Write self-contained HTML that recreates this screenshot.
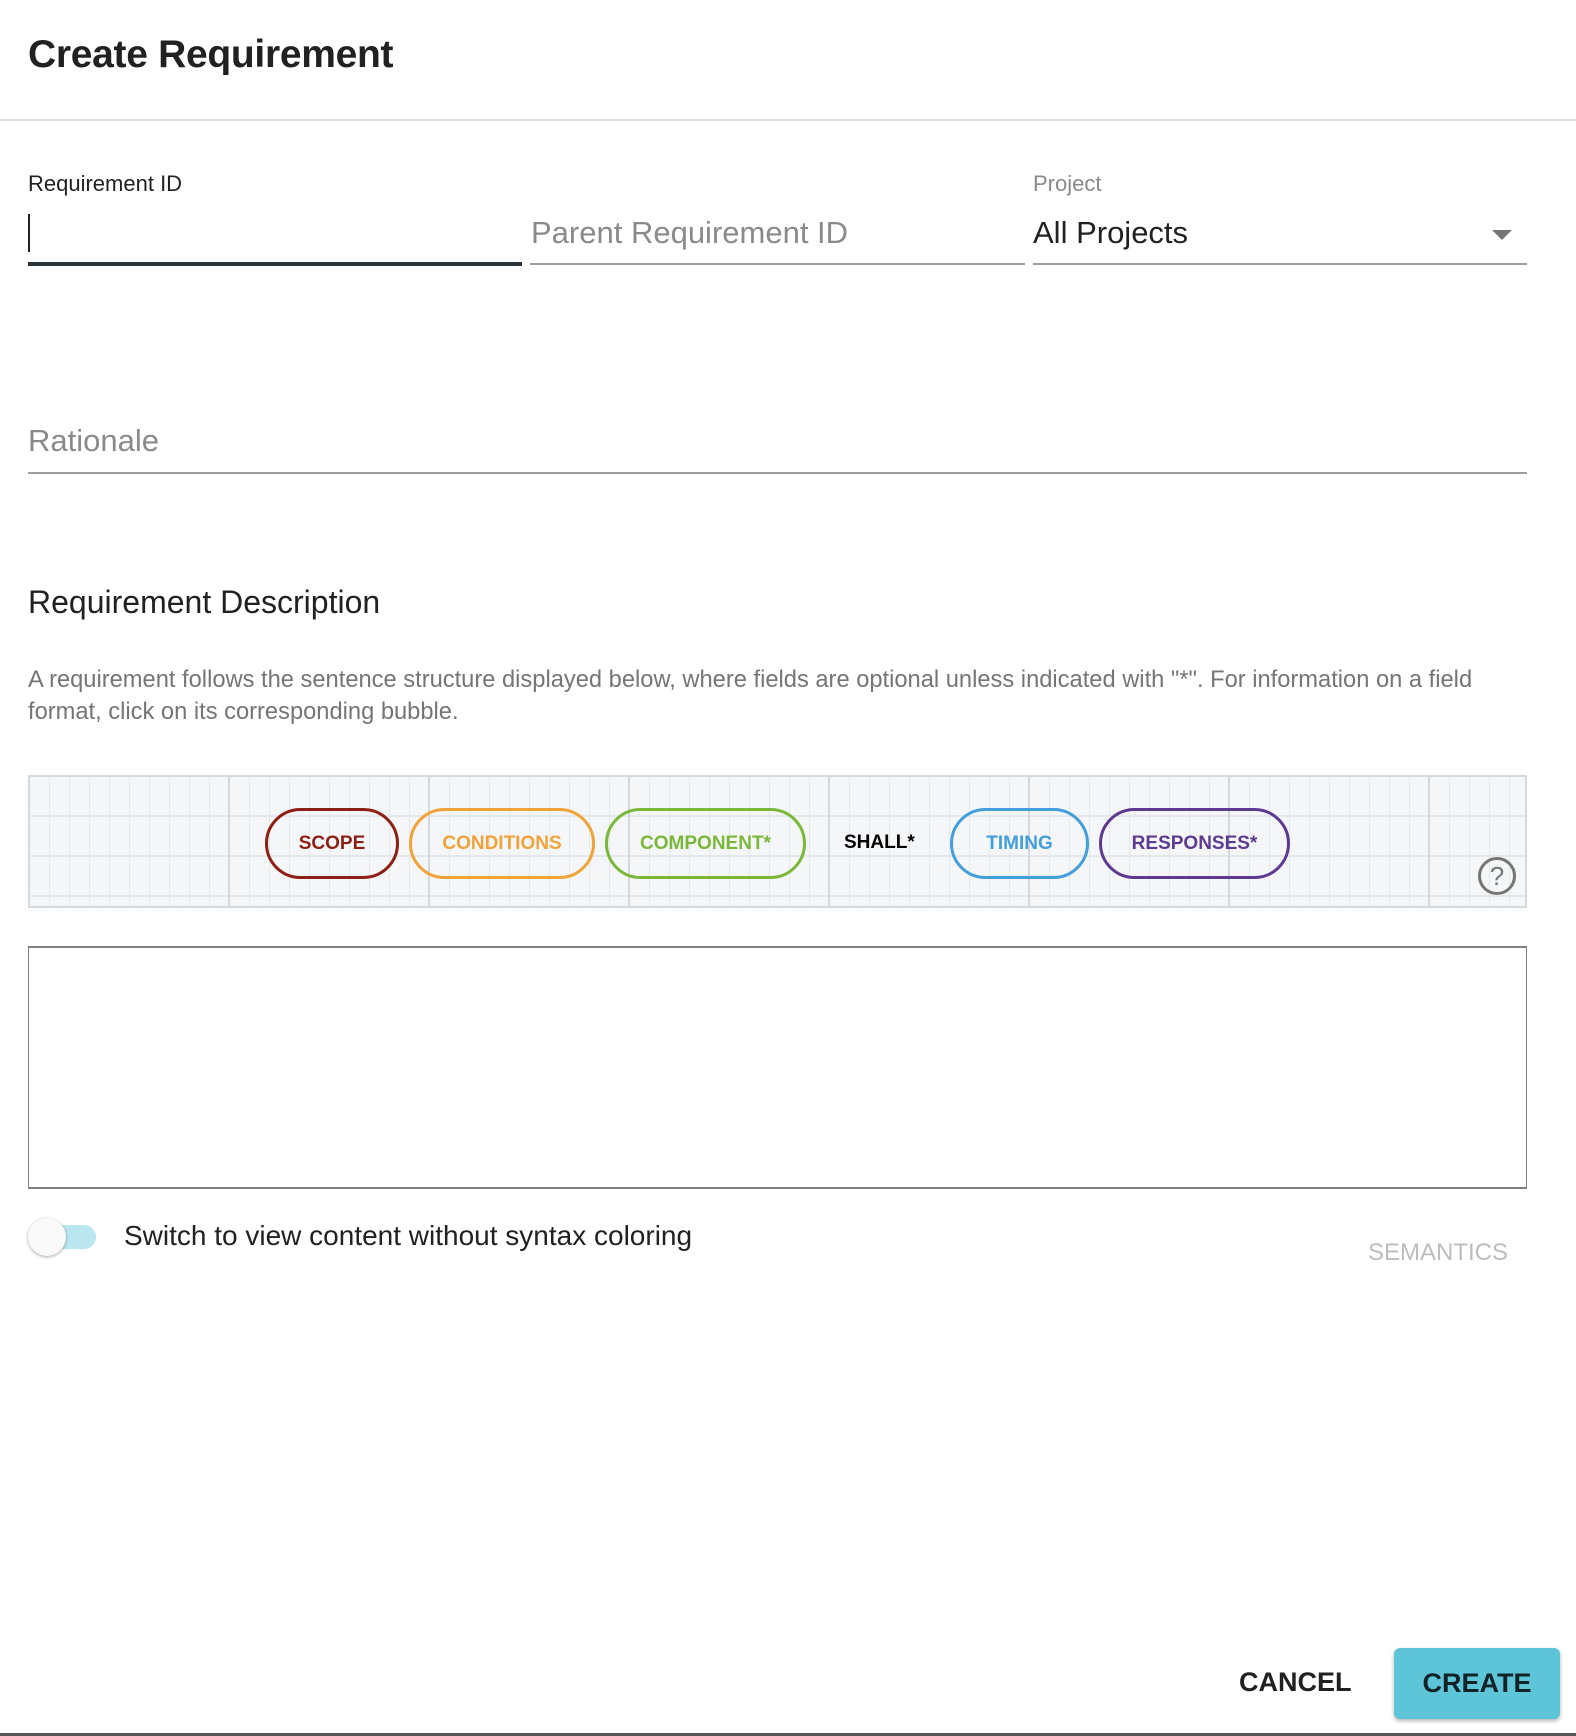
<!DOCTYPE html>
<html><head><meta charset="utf-8"><style>
*{box-sizing:border-box;margin:0;padding:0}
body{width:1576px;height:1736px;background:#fff;font-family:"Liberation Sans",Roboto,sans-serif;position:relative;overflow:hidden;color:#212121}
.a{position:absolute}
.lbl{font-size:22px;line-height:1}
.inp{font-size:31px;line-height:1}
.line{height:2px;background:#9e9e9e}
.bub{position:absolute;top:808px;height:71px;border:3px solid;border-radius:36px;display:flex;align-items:center;justify-content:center;font-weight:bold;font-size:19px;background:transparent}
</style></head><body>
<div class="a" style="left:28px;top:33px;font-size:39px;font-weight:bold;color:#212121;letter-spacing:-0.3px">Create Requirement</div>
<div class="a" style="left:0;top:119px;width:1576px;height:2px;background:#e0e0e0"></div>

<div class="a lbl" style="left:28px;top:173px;color:#212121">Requirement ID</div>
<div class="a" style="left:28px;top:214px;width:2px;height:38px;background:#212121"></div>
<div class="a" style="left:28px;top:262px;width:494px;height:4px;background:#263238"></div>

<div class="a inp" style="left:531px;top:217px;color:#8a8a8a">Parent Requirement ID</div>
<div class="a line" style="left:530px;top:263px;width:495px"></div>

<div class="a lbl" style="left:1033px;top:173px;color:#8a8a8a">Project</div>
<div class="a inp" style="left:1033px;top:217px;color:#212121">All Projects</div>
<div class="a" style="left:1492px;top:230px;width:0;height:0;border-left:10px solid transparent;border-right:10px solid transparent;border-top:10px solid #757575"></div>
<div class="a line" style="left:1033px;top:263px;width:494px"></div>

<div class="a inp" style="left:28px;top:425px;color:#8a8a8a">Rationale</div>
<div class="a line" style="left:28px;top:472px;width:1499px"></div>

<div class="a" style="left:28px;top:584px;font-size:32px;color:#212121">Requirement Description</div>
<div class="a" style="left:28px;top:664px;width:1540px;font-size:23.7px;line-height:32px;color:#757575;white-space:nowrap">A requirement follows the sentence structure displayed below, where fields are optional unless indicated with "*". For information on a field<br>format, click on its corresponding bubble.</div>

<div class="a" style="left:28px;top:775px;width:1499px;height:133px;border:2px solid #d5dade;background-color:#f4f6f8;
background-image:linear-gradient(90deg,transparent 198px,#d3d8dc 198px,#d3d8dc 200px),linear-gradient(180deg,transparent 38px,#e4e8eb 38px,#e4e8eb 40px),linear-gradient(90deg,transparent 19px,#e6e9ec 19px);
background-size:200px 100%,100% 40px,20px 100%;background-position:0 0,0 0,0 0"></div>

<div class="bub" style="left:265px;width:134px;border-color:#8e1f14;color:#8e1f14">SCOPE</div>
<div class="bub" style="left:409px;width:186px;border-color:#f0a33a;color:#f0a33a">CONDITIONS</div>
<div class="bub" style="left:605px;width:201px;border-color:#7bb83a;color:#7bb83a">COMPONENT*</div>
<div class="a" style="left:844px;top:832px;font-weight:bold;font-size:19px;color:#000">SHALL*</div>
<div class="bub" style="left:950px;width:139px;border-color:#439edb;color:#439edb">TIMING</div>
<div class="bub" style="left:1099px;width:191px;border-color:#5c3a91;color:#5c3a91">RESPONSES*</div>
<div class="a" style="left:1478px;top:857px;width:38px;height:38px;border:3px solid #757575;border-radius:50%;color:#757575;font-size:26px;line-height:32px;text-align:center">?</div>

<div class="a" style="left:28px;top:946px;width:1499px;height:243px;border:2px solid #808080;border-left-width:1px;border-right-width:1px;background:#fff"></div>

<div class="a" style="left:38px;top:1225px;width:58px;height:24px;border-radius:12px;background:#b9e6ef"></div>
<div class="a" style="left:28px;top:1218px;width:38px;height:38px;border-radius:50%;background:#fafafa;box-shadow:0 1px 3px rgba(0,0,0,.35)"></div>
<div class="a" style="left:124px;top:1220px;font-size:28px;color:#212121">Switch to view content without syntax coloring</div>
<div class="a" style="left:1368px;top:1239px;font-size:24px;color:#bdbdbd">SEMANTICS</div>

<div class="a" style="left:1239px;top:1667px;font-size:27px;font-weight:bold;color:#212121">CANCEL</div>
<div class="a" style="left:1394px;top:1648px;width:166px;height:71px;background:#5ec4d8;border-radius:6px;box-shadow:0 2px 4px rgba(0,0,0,.3);display:flex;align-items:center;justify-content:center;font-size:27px;font-weight:bold;color:#102428">CREATE</div>
<div class="a" style="left:0;top:1733px;width:1576px;height:3px;background:#555"></div>
</body></html>
